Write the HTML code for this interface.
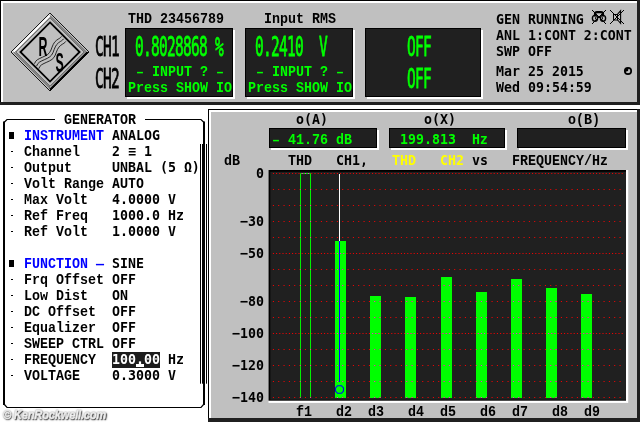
<!DOCTYPE html>
<html><head><meta charset="utf-8"><title>UPL</title>
<style>
html,body{margin:0;padding:0}
body{width:640px;height:422px;position:relative;overflow:hidden;background:#fff;font-family:"Liberation Mono",monospace}
.a{position:absolute}
.s,.v,.b{will-change:transform;position:absolute;white-space:pre;line-height:16px;height:16px;color:#000}
.s{font:bold 13.333px/16px "Liberation Mono",monospace;transform:scaleY(1.12);transform-origin:0 11px}
.v{font:bold 13.28px/16px "DejaVu Sans Mono","Liberation Mono",monospace;transform:scaleY(1.04);transform-origin:0 11px;margin:-1.5px 0 0 -0.5px}
.b{font:14.5px/16px "DejaVu Sans Mono","Liberation Mono",monospace;letter-spacing:-0.73px;-webkit-text-stroke:0.45px currentColor;transform:scaleY(1.77);transform-origin:0 0;margin-left:-0.7px}
.g{color:#00ff00}.y{color:#ffff00}.bl{color:#0000ff}.w{color:#fff}
.box{position:absolute;background:#202020;border:1.5px solid #000;box-sizing:border-box;box-shadow:2px 2px 0 #fff}
</style></head><body>

<div class="a" style="left:0;top:0;width:640px;height:105px;background:#202020"></div>
<div class="a" style="left:0;top:0;width:637px;height:102px;background:#000"></div>
<div class="a" style="left:1px;top:1px;width:636px;height:101px;background:#fff"></div>
<div class="a" style="left:3px;top:3px;width:634px;height:99px;background:#c0c0c0"></div>
<div class="a" style="left:208px;top:109px;width:432px;height:313px;background:#202020"></div>
<div class="a" style="left:208px;top:109px;width:429px;height:309px;background:#000"></div>
<div class="a" style="left:209px;top:110px;width:428px;height:308px;background:#fff"></div>
<div class="a" style="left:211px;top:112px;width:426px;height:306px;background:#c0c0c0"></div>
<svg class="a" style="left:8px;top:10px;will-change:transform" width="84" height="84" viewBox="8 10 84 84">
<polygon points="50,13 89,52 50,91 11,52" fill="#c0c0c0" stroke="#000" stroke-width="0.9"/>
<polygon points="50,13.8 11.8,52 15.2,52 50,17.2" fill="#fff"/>
<polygon points="50,91 89,52 86.2,52 50,88.2" fill="#000"/>
<path d="M50,15.6 L86.4,52 M13.6,52 L50,88.4" fill="none" stroke="#000" stroke-width="0.6"/>
<polygon points="50,17.6 84.4,52 50,86.4 15.6,52" fill="none" stroke="#000" stroke-width="0.7"/>
<polygon points="50,22.4 79.6,52 50,81.6 20.4,52" fill="none" stroke="#000" stroke-width="1.8"/>
<g fill="none" stroke="#000" stroke-width="0.8">
<path id="wv" d="M34.5,63.7 C35.5,60 38.5,59 42.5,57.2 S49.5,54 51,50 S53.5,42.5 56.5,40.3 S60,38.5 61.5,36.4"/>
<path d="M34.5,63.7 C35.5,60 38.5,59 42.5,57.2 S49.5,54 51,50 S53.5,42.5 56.5,40.3 S60,38.5 61.5,36.4" transform="translate(2.1 2.4)"/>
<path d="M34.5,63.7 C35.5,60 38.5,59 42.5,57.2 S49.5,54 51,50 S53.5,42.5 56.5,40.3 S60,38.5 61.5,36.4" transform="translate(4.3 5)"/>
</g>
<text x="0" y="0" font-family="Liberation Sans,sans-serif" font-weight="bold" font-size="27" transform="translate(38.6 56) scale(0.46 1)" fill="#000">R</text>
<text x="0" y="0" font-family="Liberation Sans,sans-serif" font-weight="bold" font-size="27" transform="translate(55.6 71.6) scale(0.46 1)" fill="#000">S</text>
</svg>
<div class="b " style="left:96px;top:33px">CH1</div>
<div class="b " style="left:96px;top:64.5px">CH2</div>
<div class="box" style="left:125px;top:28px;width:108px;height:69px"></div>
<div class="box" style="left:245px;top:28px;width:108px;height:69px"></div>
<div class="box" style="left:365px;top:28px;width:116px;height:69px"></div>
<div class="s " style="left:128px;top:12.2px">THD 23456789</div>
<div class="s " style="left:264px;top:12.2px">Input RMS</div>
<div class="b g" style="left:136px;top:33px">0.8028868 %</div>
<div class="b g" style="left:256px;top:33px">0.2410  V</div>
<div class="s g" style="left:136px;top:65.0px">– INPUT ? –</div>
<div class="s g" style="left:256px;top:65.0px">– INPUT ? –</div>
<div class="s g" style="left:128px;top:80.6px">Press SHOW IO</div>
<div class="s g" style="left:248px;top:80.6px">Press SHOW IO</div>
<div class="b g" style="left:408px;top:33px">OFF</div>
<div class="b g" style="left:408px;top:64.5px">OFF</div>
<div class="v " style="left:496px;top:13.7px">GEN RUNNING</div>
<div class="v " style="left:496px;top:29.6px">ANL 1:CONT 2:CONT</div>
<div class="v " style="left:496px;top:45.6px">SWP OFF</div>
<div class="v " style="left:496px;top:65.6px">Mar 25 2015</div>
<div class="v " style="left:496px;top:81.6px">Wed 09:54:59</div>
<svg class="a" style="left:588px;top:7px" width="50" height="72" viewBox="588 7 50 72">
<g fill="none" stroke="#000">
<path d="M595,16.5 V14 Q595,12.2 597,12.2 H601 Q603,12.2 603,14 V16.5" stroke-width="2.2"/>
<ellipse cx="595" cy="18.3" rx="2.6" ry="2.9" stroke-width="1.4"/>
<ellipse cx="603" cy="18.3" rx="2.6" ry="2.9" stroke-width="1.4"/>
<path d="M595.6,17.2 v2.2 M602.4,17.2 v2.2" stroke-width="1"/>
<path d="M592,10 L606,24 M606,10 L592,24" stroke-width="1"/>
<rect x="613.5" y="14.5" width="4" height="5.5" stroke-width="1"/>
<path d="M617.6,14.2 L620.6,10.8 V23.4 L617.6,20" stroke-width="1.1"/>
<path d="M610,10 L624,24 M624,10 L610,24" stroke-width="1"/>
<circle cx="628" cy="71" r="3.2" stroke-width="1.7"/>
</g>
<path d="M628,71 L625,72 A3.4,3.4 0 0 1 628.6,67.7 Z" fill="#000"/>
</svg>
<svg class="a" style="left:0;top:105px" width="208" height="317" viewBox="0 105 208 317">
<g fill="none" stroke="#000">
<path d="M4,405 V121.5 M204,405 V121.5" stroke-width="2"/>
<path d="M55,119.5 H7 L4,122.5 M4,404 L7,407.5 H201 L204,404 M145,119.5 H201 L204,122.5" stroke-width="1.2"/>
<path d="M200.5,144 V383.7 M206.5,144 V383.7" stroke-width="1"/>
<path d="M202.5,144 V383.7" stroke-width="1"/>
</g>
</svg>
<div class="s " style="left:64px;top:113.0px">GENERATOR</div>
<div class="a" style="left:9px;top:131.8px;width:5px;height:7px;background:#000"></div>
<div class="s bl" style="left:24px;top:129.0px">INSTRUMENT</div>
<div class="v " style="left:112px;top:129.0px">ANALOG</div>
<div class="a" style="left:10.5px;top:151.4px;width:2.5px;height:1px;background:#000"></div>
<div class="s " style="left:24px;top:145.0px">Channel</div>
<div class="v " style="left:112px;top:145.0px">2 ≡ 1</div>
<div class="a" style="left:10.5px;top:167.4px;width:2.5px;height:1px;background:#000"></div>
<div class="s " style="left:24px;top:161.0px">Output</div>
<div class="v " style="left:112px;top:161.0px">UNBAL (5 Ω)</div>
<div class="a" style="left:10.5px;top:183.4px;width:2.5px;height:1px;background:#000"></div>
<div class="s " style="left:24px;top:177.0px">Volt Range</div>
<div class="v " style="left:112px;top:177.0px">AUTO</div>
<div class="a" style="left:10.5px;top:199.4px;width:2.5px;height:1px;background:#000"></div>
<div class="s " style="left:24px;top:193.0px">Max Volt</div>
<div class="v " style="left:112px;top:193.0px">4.0000 V</div>
<div class="a" style="left:10.5px;top:215.4px;width:2.5px;height:1px;background:#000"></div>
<div class="s " style="left:24px;top:209.0px">Ref Freq</div>
<div class="v " style="left:112px;top:209.0px">1000.0 Hz</div>
<div class="a" style="left:10.5px;top:231.4px;width:2.5px;height:1px;background:#000"></div>
<div class="s " style="left:24px;top:225.0px">Ref Volt</div>
<div class="v " style="left:112px;top:225.0px">1.0000 V</div>
<div class="a" style="left:9px;top:259.8px;width:5px;height:7px;background:#000"></div>
<div class="s bl" style="left:24px;top:257.0px">FUNCTION —</div>
<div class="v " style="left:112px;top:257.0px">SINE</div>
<div class="a" style="left:10.5px;top:279.4px;width:2.5px;height:1px;background:#000"></div>
<div class="s " style="left:24px;top:273.0px">Frq Offset</div>
<div class="v " style="left:112px;top:273.0px">OFF</div>
<div class="a" style="left:10.5px;top:295.4px;width:2.5px;height:1px;background:#000"></div>
<div class="s " style="left:24px;top:289.0px">Low Dist</div>
<div class="v " style="left:112px;top:289.0px">ON</div>
<div class="a" style="left:10.5px;top:311.4px;width:2.5px;height:1px;background:#000"></div>
<div class="s " style="left:24px;top:305.0px">DC Offset</div>
<div class="v " style="left:112px;top:305.0px">OFF</div>
<div class="a" style="left:10.5px;top:327.4px;width:2.5px;height:1px;background:#000"></div>
<div class="s " style="left:24px;top:321.0px">Equalizer</div>
<div class="v " style="left:112px;top:321.0px">OFF</div>
<div class="a" style="left:10.5px;top:343.4px;width:2.5px;height:1px;background:#000"></div>
<div class="s " style="left:24px;top:337.0px">SWEEP CTRL</div>
<div class="v " style="left:112px;top:337.0px">OFF</div>
<div class="a" style="left:10.5px;top:359.4px;width:2.5px;height:1px;background:#000"></div>
<div class="s " style="left:24px;top:353.0px">FREQUENCY</div>
<div class="a" style="left:112px;top:352.4px;width:48px;height:15.4px;background:#1c1c1c"></div>
<div class="v w" style="left:112px;top:353.0px">100.00</div>
<div class="a" style="left:136px;top:364.0px;width:8px;height:2.8px;background:#fff"></div>
<div class="v " style="left:168px;top:353.0px">Hz</div>
<div class="a" style="left:10.5px;top:375.4px;width:2.5px;height:1px;background:#000"></div>
<div class="s " style="left:24px;top:369.0px">VOLTAGE</div>
<div class="v " style="left:112px;top:369.0px">0.3000 V</div>
<div class="v " style="left:296px;top:113.0px">o(A)</div>
<div class="v " style="left:424px;top:113.0px">o(X)</div>
<div class="s " style="left:568px;top:113.0px">o(B)</div>
<div class="box" style="left:269px;top:128px;width:108px;height:20px"></div>
<div class="box" style="left:389px;top:128px;width:116px;height:20px"></div>
<div class="box" style="left:517px;top:128px;width:109px;height:20px"></div>
<div class="s g" style="left:272px;top:132.8px">– 41.76 dB</div>
<div class="v g" style="left:400px;top:133.0px">199.813  Hz</div>
<div class="s " style="left:224px;top:153.6px">dB</div>
<div class="s " style="left:288px;top:154.1px">THD</div>
<div class="v " style="left:336px;top:154.1px">CH1,</div>
<div class="s y" style="left:392px;top:154.1px">THD</div>
<div class="v y" style="left:440px;top:154.1px">CH2</div>
<div class="v " style="left:472px;top:154.1px">vs</div>
<div class="s " style="left:512px;top:154.1px">FREQUENCY/Hz</div>
<div class="v " style="left:256px;top:167.0px">0</div>
<div class="v " style="left:240px;top:215.0px">−30</div>
<div class="v " style="left:240px;top:247.0px">−50</div>
<div class="v " style="left:240px;top:295.0px">−80</div>
<div class="v " style="left:232px;top:327.0px">−100</div>
<div class="v " style="left:232px;top:359.0px">−120</div>
<div class="v " style="left:232px;top:391.0px">−140</div>
<div class="s " style="left:296px;top:404.8px">f1</div>
<div class="s " style="left:336px;top:404.8px">d2</div>
<div class="s " style="left:368px;top:404.8px">d3</div>
<div class="s " style="left:408px;top:404.8px">d4</div>
<div class="s " style="left:440px;top:404.8px">d5</div>
<div class="s " style="left:480px;top:404.8px">d6</div>
<div class="s " style="left:512px;top:404.8px">d7</div>
<div class="s " style="left:552px;top:404.8px">d8</div>
<div class="s " style="left:584px;top:404.8px">d9</div>
<svg class="a" style="left:268px;top:169px;will-change:transform" width="362" height="236" viewBox="268 169 362 236" shape-rendering="auto">
<rect x="268.5" y="170" width="359.7" height="232.9" fill="#fff"/>
<rect x="268.5" y="170" width="357.5" height="230.7" fill="#000"/>
<rect x="270.3" y="171.8" width="355.7" height="228" fill="#202020"/>
<rect x="335" y="241" width="11" height="157" fill="#00ff00"/>
<rect x="370" y="296" width="11" height="102" fill="#00ff00"/>
<rect x="405" y="297" width="11" height="101" fill="#00ff00"/>
<rect x="441" y="277" width="11" height="121" fill="#00ff00"/>
<rect x="476" y="292" width="11" height="106" fill="#00ff00"/>
<rect x="511" y="279" width="11" height="119" fill="#00ff00"/>
<rect x="546" y="288" width="11" height="110" fill="#00ff00"/>
<rect x="581" y="294" width="11" height="104" fill="#00ff00"/>
<path d="M300.5,398 V173.5 H310.5 V398" fill="none" stroke="#00f000" stroke-width="1"/>
<line x1="272.9" x2="624.5" y1="173.5" y2="173.5" stroke="#ff0000" stroke-width="1.1" stroke-dasharray="1 2.2"/>
<line x1="272.9" x2="624.5" y1="189.5" y2="189.5" stroke="#ff0000" stroke-width="1.1" stroke-dasharray="1 4.3333"/>
<line x1="272.9" x2="624.5" y1="205.5" y2="205.5" stroke="#ff0000" stroke-width="1.1" stroke-dasharray="1 4.3333"/>
<line x1="272.9" x2="624.5" y1="221.5" y2="221.5" stroke="#ff0000" stroke-width="1.1" stroke-dasharray="1 4.3333"/>
<line x1="272.9" x2="624.5" y1="237.5" y2="237.5" stroke="#ff0000" stroke-width="1.1" stroke-dasharray="1 4.3333"/>
<line x1="272.9" x2="624.5" y1="253.5" y2="253.5" stroke="#ff0000" stroke-width="1.1" stroke-dasharray="1 2.2"/>
<line x1="272.9" x2="624.5" y1="269.5" y2="269.5" stroke="#ff0000" stroke-width="1.1" stroke-dasharray="1 4.3333"/>
<line x1="272.9" x2="624.5" y1="285.5" y2="285.5" stroke="#ff0000" stroke-width="1.1" stroke-dasharray="1 4.3333"/>
<line x1="272.9" x2="624.5" y1="301.5" y2="301.5" stroke="#ff0000" stroke-width="1.1" stroke-dasharray="1 4.3333"/>
<line x1="272.9" x2="624.5" y1="317.5" y2="317.5" stroke="#ff0000" stroke-width="1.1" stroke-dasharray="1 4.3333"/>
<line x1="272.9" x2="624.5" y1="333.5" y2="333.5" stroke="#ff0000" stroke-width="1.1" stroke-dasharray="1 2.2"/>
<line x1="272.9" x2="624.5" y1="349.5" y2="349.5" stroke="#ff0000" stroke-width="1.1" stroke-dasharray="1 4.3333"/>
<line x1="272.9" x2="624.5" y1="365.5" y2="365.5" stroke="#ff0000" stroke-width="1.1" stroke-dasharray="1 4.3333"/>
<line x1="272.9" x2="624.5" y1="381.5" y2="381.5" stroke="#ff0000" stroke-width="1.1" stroke-dasharray="1 4.3333"/>
<line x1="272.9" x2="624.5" y1="397.5" y2="397.5" stroke="#ff0000" stroke-width="1.1" stroke-dasharray="1 4.3333"/>
<clipPath id="bc"><rect x="335" y="241" width="11" height="157"/><rect x="370" y="296" width="11" height="102"/><rect x="405" y="297" width="11" height="101"/><rect x="441" y="277" width="11" height="121"/><rect x="476" y="292" width="11" height="106"/><rect x="511" y="279" width="11" height="119"/><rect x="546" y="288" width="11" height="110"/><rect x="581" y="294" width="11" height="104"/><rect x="300" y="173" width="1" height="225"/><rect x="310" y="173" width="1" height="225"/><rect x="300" y="173" width="11" height="1"/></clipPath>
<g clip-path="url(#bc)">
<line x1="272.9" x2="624.5" y1="173.5" y2="173.5" stroke="#e838e8" stroke-width="1.1" stroke-dasharray="1 2.2"/>
<line x1="272.9" x2="624.5" y1="189.5" y2="189.5" stroke="#e838e8" stroke-width="1.1" stroke-dasharray="1 4.3333"/>
<line x1="272.9" x2="624.5" y1="205.5" y2="205.5" stroke="#e838e8" stroke-width="1.1" stroke-dasharray="1 4.3333"/>
<line x1="272.9" x2="624.5" y1="221.5" y2="221.5" stroke="#e838e8" stroke-width="1.1" stroke-dasharray="1 4.3333"/>
<line x1="272.9" x2="624.5" y1="237.5" y2="237.5" stroke="#e838e8" stroke-width="1.1" stroke-dasharray="1 4.3333"/>
<line x1="272.9" x2="624.5" y1="253.5" y2="253.5" stroke="#e838e8" stroke-width="1.1" stroke-dasharray="1 2.2"/>
<line x1="272.9" x2="624.5" y1="269.5" y2="269.5" stroke="#e838e8" stroke-width="1.1" stroke-dasharray="1 4.3333"/>
<line x1="272.9" x2="624.5" y1="285.5" y2="285.5" stroke="#e838e8" stroke-width="1.1" stroke-dasharray="1 4.3333"/>
<line x1="272.9" x2="624.5" y1="301.5" y2="301.5" stroke="#e838e8" stroke-width="1.1" stroke-dasharray="1 4.3333"/>
<line x1="272.9" x2="624.5" y1="317.5" y2="317.5" stroke="#e838e8" stroke-width="1.1" stroke-dasharray="1 4.3333"/>
<line x1="272.9" x2="624.5" y1="333.5" y2="333.5" stroke="#e838e8" stroke-width="1.1" stroke-dasharray="1 2.2"/>
<line x1="272.9" x2="624.5" y1="349.5" y2="349.5" stroke="#e838e8" stroke-width="1.1" stroke-dasharray="1 4.3333"/>
<line x1="272.9" x2="624.5" y1="365.5" y2="365.5" stroke="#e838e8" stroke-width="1.1" stroke-dasharray="1 4.3333"/>
<line x1="272.9" x2="624.5" y1="381.5" y2="381.5" stroke="#e838e8" stroke-width="1.1" stroke-dasharray="1 4.3333"/>
<line x1="272.9" x2="624.5" y1="397.5" y2="397.5" stroke="#e838e8" stroke-width="1.1" stroke-dasharray="1 4.3333"/>
</g>
<line x1="339.5" x2="339.5" y1="174" y2="241" stroke="#fff" stroke-width="1"/>
<line x1="339.5" x2="339.5" y1="241" y2="382" stroke="#0000ff" stroke-width="1"/>
<polygon points="337.5,385.7 341.5,385.7 343.5,388 343.5,391 341.5,393.3 337.5,393.3 335.5,391 335.5,388" fill="none" stroke="#0000ff" stroke-width="1.1"/>
</svg>
<div class="a" style="left:3px;top:406.8px;font:italic bold 13.5px/16px 'Liberation Sans',sans-serif;color:#f0f0f0;-webkit-text-stroke:0.6px #e4e4e4;text-shadow:1px 1px 1px #444,1px 1px 2px #666,0 0 2px #777;transform:scaleX(0.83);transform-origin:0 0;white-space:pre;letter-spacing:-0.3px">© KenRockwell.com</div>
</body></html>
